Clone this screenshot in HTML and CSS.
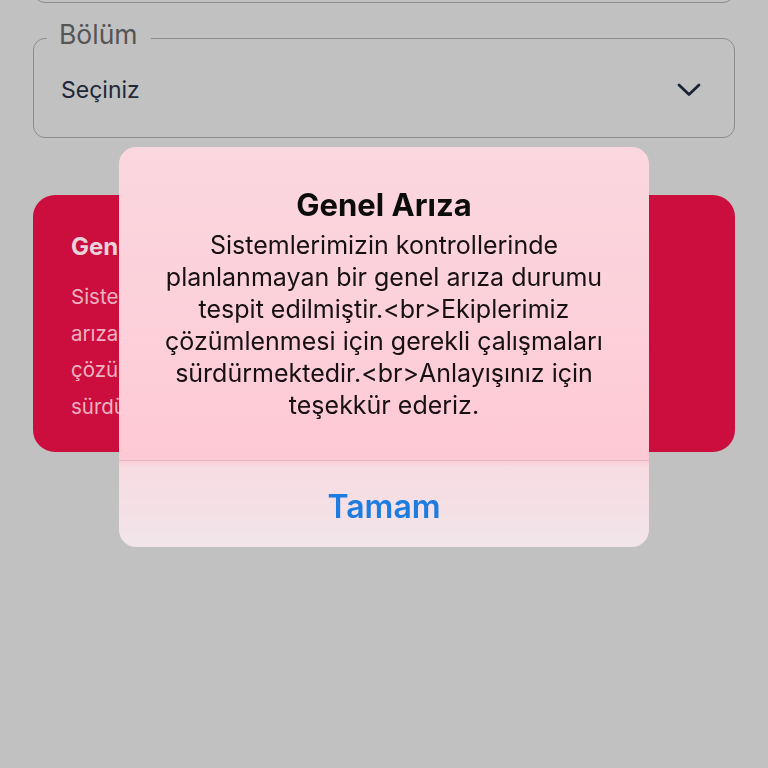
FILE: index.html
```html
<!DOCTYPE html>
<html lang="tr">
<head>
<meta charset="utf-8">
<link rel="stylesheet" href="styles.css">
</head>
<body>
<div class="page">
  <div class="prev-field"></div>
  <fieldset class="field">
    <legend class="field-label">Bölüm</legend>
    <div class="field-row">
      <span class="field-value">Seçiniz</span>
      <svg class="chevron" width="26" height="16" viewBox="0 0 26 16"><path d="M3 3 L13 12.5 L23 3" fill="none" stroke="#1b2436" stroke-width="2.8" stroke-linecap="round" stroke-linejoin="round"/></svg>
    </div>
  </fieldset>
  <div class="notice">
    <div class="notice-title">Genel Arıza</div>
    <div class="notice-body">
      <span class="line">Sistemlerimizin kontrollerinde planlanmayan bir genel</span>
      <span class="line">arıza durumu tespit edilmiştir.&lt;br&gt;Ekiplerimiz</span>
      <span class="line">çözümlenmesi için gerekli çalışmaları</span>
      <span class="line">sürdürmektedir.&lt;br&gt;Anlayışınız için</span>
    </div>
  </div>
</div>
<div class="overlay">
  <div class="dialog">
    <div class="dialog-content">
      <div class="dialog-title">Genel Arıza</div>
      <div class="dialog-text">Sistemlerimizin kontrollerinde<br>planlanmayan bir genel arıza durumu<br>tespit edilmiştir.&lt;br&gt;Ekiplerimiz<br>çözümlenmesi için gerekli çalışmaları<br>sürdürmektedir.&lt;br&gt;Anlayışınız için<br>teşekkür ederiz.</div>
    </div>
    <div class="dialog-actions">
      <span class="dialog-button">Tamam</span>
    </div>
  </div>
</div>
</body>
</html>
```

FILE: styles.css
```css
html, body {
  margin: 0;
  padding: 0;
  background: #c1c1c1;
  height: 100%;
  overflow: hidden;
}
body {
  font-family: Inter, "Noto Sans", "Liberation Sans", sans-serif;
}
.page {
  padding: 0 33px;
}
.prev-field {
  height: 100px;
  margin-top: -99px;
  border: 1.5px solid #8c8c8c;
  border-radius: 12px;
}
.field {
  margin: 16px 0 0 0;
  padding: 0 32px 0 27px;
  height: 119px;
  box-sizing: border-box;
  border: 1.5px solid #8c8c8c;
  border-radius: 12px;
  min-width: 0;
}
.field-label {
  font-size: 26.5px;
  line-height: 30px;
  color: #555;
  padding: 0 13px 0 12px;
  margin-left: -14px;
  padding-bottom: 8px;
}
.field-row {
  display: flex;
  align-items: center;
  justify-content: space-between;
  height: 66px;
  margin-top: 0;
}
.field-value {
  font-size: 23px;
  color: #1e2838;
}
.chevron {
  display: block;
}
.notice {
  margin-top: 57px;
  height: 257px;
  box-sizing: border-box;
  background: #cc0e3e;
  border-radius: 22px;
  padding: 37px 38px;
}
.notice-title {
  font-size: 24px;
  font-weight: 700;
  line-height: 30px;
  color: #e9d3d9;
}
.notice-body {
  margin-top: 17px;
  font-size: 20.5px;
  line-height: 36.5px;
  color: #eeb2c1;
}
.notice-body .line {
  display: block;
  white-space: nowrap;
}
.overlay {
  position: fixed;
  inset: 0;
  display: flex;
  justify-content: center;
  align-items: flex-start;
  padding-top: 147px;
}
.dialog {
  width: 530px;
  height: 400px;
  border-radius: 17px;
  overflow: hidden;
  display: flex;
  flex-direction: column;
  background: linear-gradient(#fbd7df 0%, #fcd0da 45%, #fdc9d4 78%, #f7dbe2 80%, #f1e5e9 100%);
}
.dialog-content {
  height: 314px;
  box-sizing: border-box;
  padding-top: 40px;
  text-align: center;
  border-bottom: 1px solid #e2b9c3;
}
.dialog-title {
  font-size: 31px;
  font-weight: 700;
  line-height: 36px;
  color: #0c0c0c;
}
.dialog-text {
  margin-top: 6px;
  font-size: 25px;
  line-height: 32px;
  color: #171014;
}
.dialog-actions {
  flex: 1;
  display: flex;
  align-items: center;
  justify-content: center;
}
.dialog-button {
  font-size: 32px;
  font-weight: 600;
  color: #1c7ce0;
  margin-top: 4px;
}
```
